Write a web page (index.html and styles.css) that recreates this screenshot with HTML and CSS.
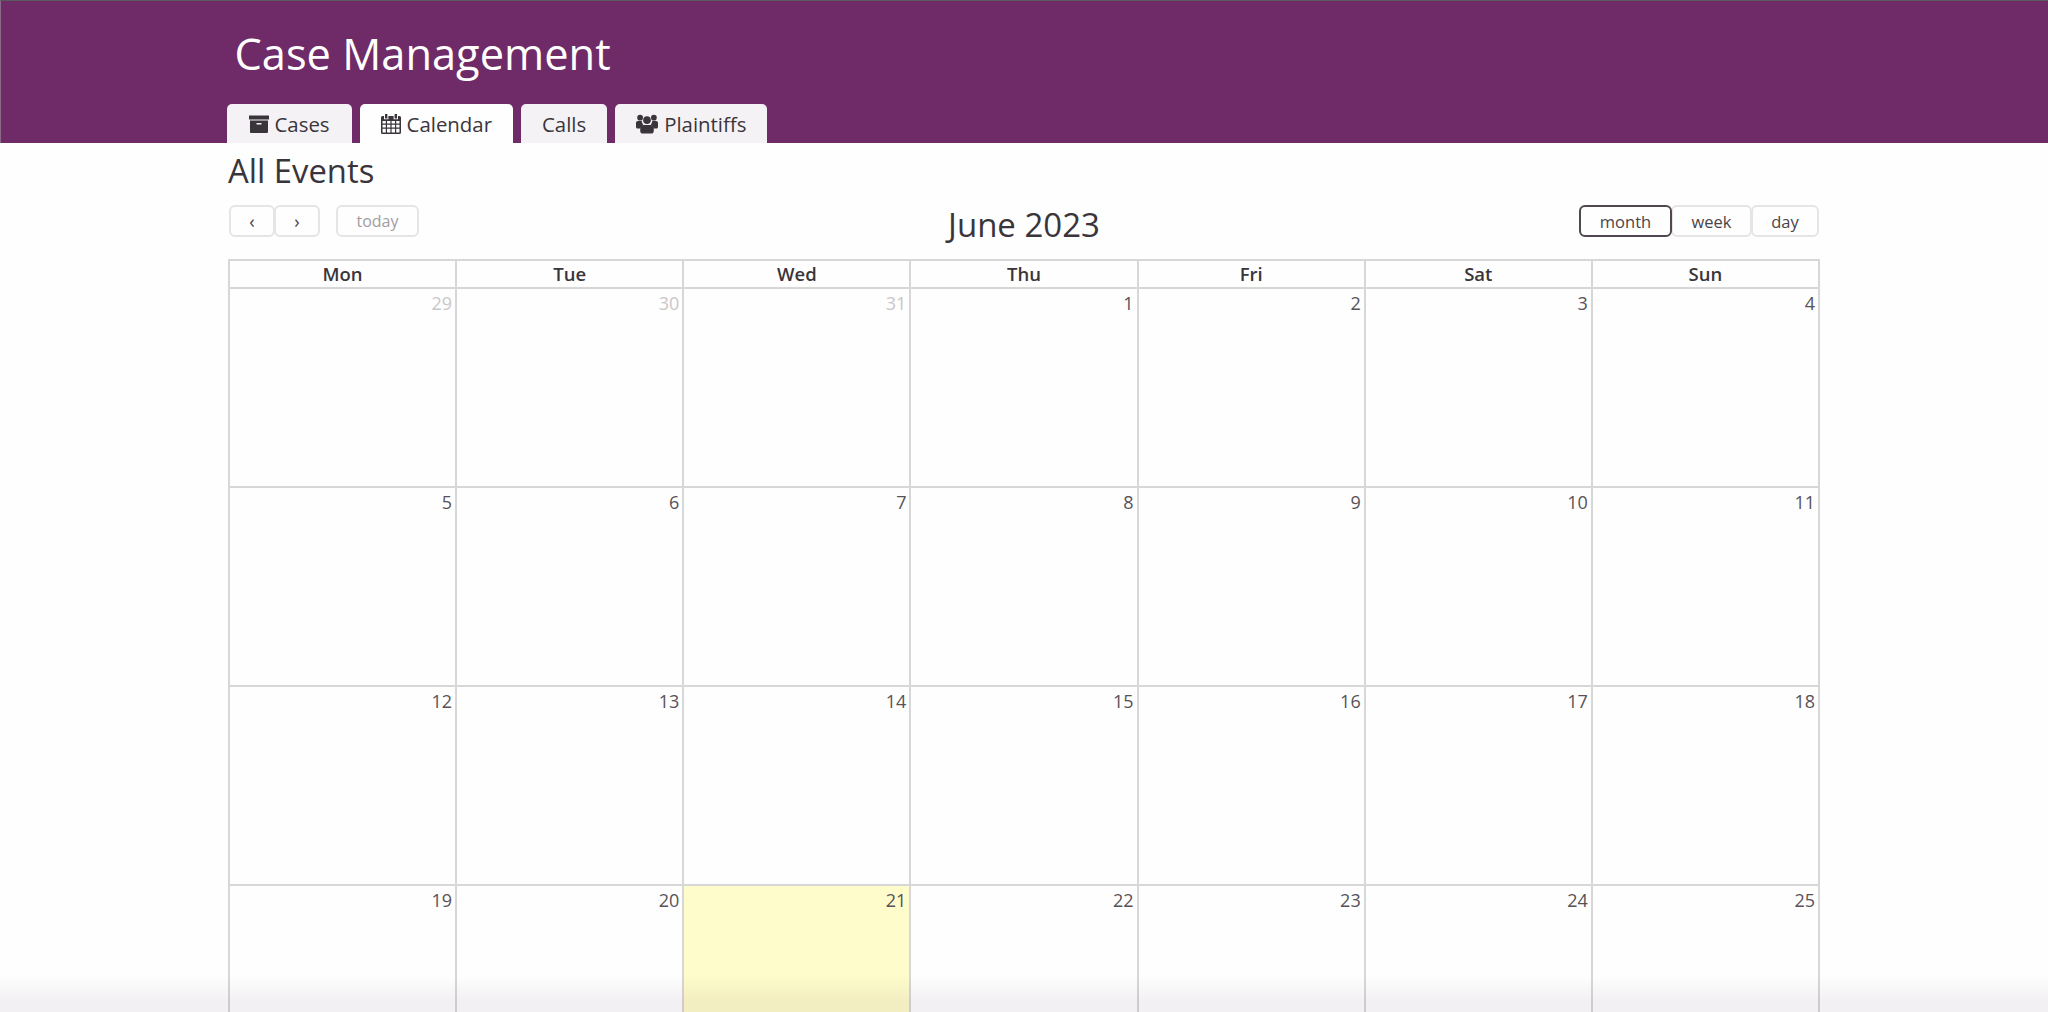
FILE: index.html
```html
<!DOCTYPE html>
<html lang="en">
<head>
  <meta charset="UTF-8" />
  <title>Case Management</title>
  <link rel="stylesheet" href="styles.css">
</head>
<body>

  <!-- HEADER -->
  <div class="cabecera">
    <div class="contenedor">
      <h1 class="marca">Case Management</h1>
      <div class="pestanas">
        <a class="pestana pestana-casos">
          <svg class="icono icono-caja" viewBox="0 0 20 18"><path d="M0 0.500h20v4H0z M1 5.500h18V17a1 1 0 0 1-1 1H2a1 1 0 0 1-1-1z M7.500 8v1.400h5V8z" fill-rule="evenodd"/></svg>
          Cases
        </a>
        <a class="pestana activa">
          <svg class="icono" viewBox="0 0 20 20"><path fill-rule="evenodd" d="M4 0h2.400v4.400H4z M13.600 0H16v4.400h-2.400z M1.500 2H3v3.200h4.400V2h5.200v3.200H17V2h1.500A1.500 1.500 0 0 1 20 3.500V18.500a1.500 1.500 0 0 1-1.500 1.500h-17A1.500 1.500 0 0 1 0 18.500V3.500A1.500 1.500 0 0 1 1.500 2z M1.500 7v2.500h3.300V7z M6 7v2.500h3.400V7z M10.600 7v2.500H14V7z M15.200 7v2.500h3.300V7z M1.500 10.700v2.800h3.300v-2.800z M6 10.700v2.800h3.400v-2.800z M10.600 10.700v2.800H14v-2.800z M15.200 10.700v2.800h3.300v-2.800z M1.500 14.700v3.800h3.300v-3.800z M6 14.700v3.800h3.400v-3.800z M10.600 14.700v3.800H14v-3.800z M15.200 14.700v3.800h3.300v-3.800z"/></svg>
          Calendar
        </a>
        <a class="pestana">Calls</a>
        <a class="pestana">
          <svg class="icono icono-ancho" viewBox="0 0 23 20"><circle cx="4.300" cy="3.400" r="3"/><circle cx="18.700" cy="3.400" r="3"/><circle cx="11.500" cy="6" r="4"/><path d="M0 9c0-1.400.8-2.100 2-2.100h4c.1 1.600.7 2.900 1.700 3.800-2 .6-3.200 2.200-3.500 4.100H2c-1.200 0-2-.8-2-2z M23 9c0-1.400-.8-2.100-2-2.100h-4c-.1 1.600-.7 2.900-1.700 3.800 2 .6 3.200 2.200 3.500 4.100H21c1.200 0 2-.8 2-2z M8 11h7c2.200 0 3.600 1.700 3.600 4v2.200c0 1.700-1.100 2.800-2.800 2.800H7.200c-1.700 0-2.800-1.100-2.800-2.800V15c0-2.300 1.400-4 3.600-4z"/></svg>
          Plaintiffs
        </a>
      </div>
    </div>
  </div>

  <!-- CONTENIDO -->
  <div class="contenedor">
    <h2 class="titulo">All Events</h2>

    <div class="barra">
      <div class="barra-izq">
        <div class="grupo">
          <button class="boton flecha">‹</button>
          <button class="boton flecha">›</button>
        </div>
        <button class="boton hoy">today</button>
      </div>
      <div class="mes">June 2023</div>
      <div class="grupo grupo-vistas">
        <button class="boton vista vista-mes">month</button>
        <button class="boton vista vista-semana">week</button>
        <button class="boton vista vista-dia">day</button>
      </div>
    </div>

    <table class="calendario">
      <thead>
        <tr><th>Mon</th><th>Tue</th><th>Wed</th><th>Thu</th><th>Fri</th><th>Sat</th><th>Sun</th></tr>
      </thead>
      <tbody>
        <tr>
          <td class="otro-mes">29</td><td class="otro-mes">30</td><td class="otro-mes">31</td>
          <td>1</td><td>2</td><td>3</td><td>4</td>
        </tr>
        <tr>
          <td>5</td><td>6</td><td>7</td><td>8</td><td>9</td><td>10</td><td>11</td>
        </tr>
        <tr>
          <td>12</td><td>13</td><td>14</td><td>15</td><td>16</td><td>17</td><td>18</td>
        </tr>
        <tr>
          <td>19</td><td>20</td><td class="hoy-celda">21</td><td>22</td><td>23</td><td>24</td><td>25</td>
        </tr>
      </tbody>
    </table>
  </div>

  <div class="sombra"></div>

</body>
</html>
```

FILE: styles.css
```css
html, body {
  height: 100%;
}

body {
  margin: 0;
  font-family: 'Open Sans', sans-serif;
  background-color: #fefefe;
  color: #3a353a;
  overflow: hidden;
}

.contenedor {
  width: 1592px;
  margin: 0 auto;
}

.cabecera {
  height: 143px;
  box-sizing: border-box;
  background-color: #6f2a68;
  border-top: 1px solid #5a5a5a;
  border-left: 1px solid #8a6a88;
}

.cabecera .contenedor {
  display: flex;
  flex-direction: column;
  height: 100%;
  justify-content: space-between;
}

.marca {
  margin: 23px 0 0 6px;
  font-size: 43.4px;
  font-weight: 400;
  line-height: 60px;
  color: #fff;
}

.pestanas {
  display: flex;
  gap: 8px;
  margin-left: -2px;
}

.pestana {
  display: flex;
  align-items: center;
  justify-content: center;
  gap: 6px;
  height: 39px;
  padding: 0 21px;
  background-color: #f4f2f5;
  border-radius: 5px 5px 0 0;
  font-size: 20.4px;
}

.pestana-casos {
  padding: 0 22px;
}

.pestana.activa {
  background-color: #fefefe;
}

.icono {
  width: 20px;
  height: 20px;
  fill: #3a353a;
}

.icono-caja {
  height: 18px;
}

.icono-ancho {
  width: 22px;
}

.titulo {
  margin: 6px 0 0;
  font-size: 32.8px;
  font-weight: 400;
  line-height: 44px;
}

.barra {
  display: flex;
  justify-content: space-between;
  align-items: center;
  height: 32px;
  margin: 12px 0 22px;
  position: relative;
}

.barra-izq {
  display: flex;
  gap: 16px;
  padding-left: 1px;
}

.grupo {
  display: flex;
}

.grupo-vistas {
  margin-right: 1px;
}

.boton {
  height: 32px;
  padding: 0;
  background-color: #fefefe;
  border: 2px solid #e6e4e6;
  border-radius: 6px;
  font-family: 'Open Sans', sans-serif;
  font-size: 16px;
  color: #4a444a;
}

.flecha {
  width: 46px;
  font-size: 18px;
}

.flecha:last-child {
  margin-left: -1px;
}

.hoy {
  width: 83px;
  color: #a29ca2;
}

.vista {
  font-size: 16.5px;
}

.mes {
  position: absolute;
  left: 0;
  right: 0;
  top: -2px;
  text-align: center;
  font-size: 33px;
  line-height: 44px;
  pointer-events: none;
}

.vista-mes {
  width: 93px;
  border-color: #4f494f;
  position: relative;
}

.vista-semana {
  width: 81px;
  margin-left: -1px;
}

.vista-dia {
  width: 68px;
  margin-left: -1px;
}

.calendario {
  width: 100%;
  table-layout: fixed;
  border-collapse: collapse;
}

.calendario th,
.calendario td {
  border: 2px solid #d8d7d8;
}

.calendario th {
  height: 28px;
  padding: 0 0 1px;
  box-sizing: border-box;
  font-size: 18.5px;
  font-weight: 600;
  line-height: 25px;
}

.calendario td {
  height: 199px;
  box-sizing: border-box;
  padding: 1px 3px 0 0;
  vertical-align: top;
  text-align: right;
  font-size: 18px;
  line-height: 26px;
  color: #585258;
}

.calendario td.otro-mes {
  color: #c9c7c9;
}

.calendario td.hoy-celda {
  background-color: #fefccb;
}

/* fade that sits over the bottom of the page */
.sombra {
  position: fixed;
  left: 0;
  right: 0;
  bottom: 0;
  height: 36px;
  background: linear-gradient(#fff, #f3f1f3 70%);
  mix-blend-mode: multiply;
  pointer-events: none;
}
```
